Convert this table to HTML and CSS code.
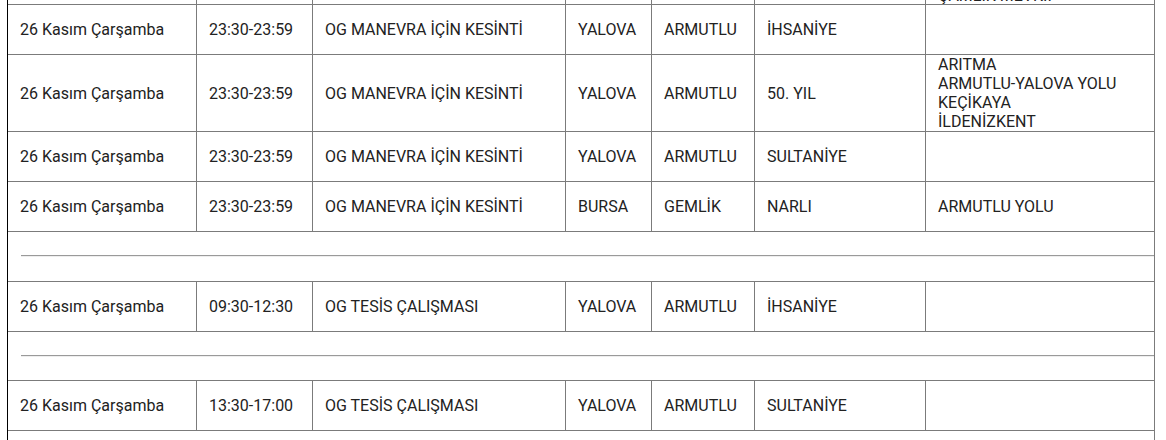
FILE: index.html
```html
<!DOCTYPE html>
<html lang="tr">
<head>
<meta charset="utf-8">
<title>Kesinti Listesi</title>
<link rel="stylesheet" href="styles.css">
</head>
<body>
<div class="frame">
  <table class="outages">
    <colgroup>
      <col class="w-date"><col class="w-time"><col class="w-reason"><col class="w-city"><col class="w-town"><col class="w-hood"><col class="w-street">
    </colgroup>
    <tbody>
      <tr class="prev">
        <td></td><td></td><td></td><td></td><td></td><td></td>
        <td class="tail">KARADERE<br>SAHİL YOLU<br>ÇAMLIK MEVKİİ</td>
      </tr>
      <tr>
        <td>26 Kasım Çarşamba</td><td>23:30-23:59</td><td>OG MANEVRA İÇİN KESİNTİ</td><td>YALOVA</td><td>ARMUTLU</td><td>İHSANİYE</td><td></td>
      </tr>
      <tr>
        <td>26 Kasım Çarşamba</td><td>23:30-23:59</td><td>OG MANEVRA İÇİN KESİNTİ</td><td>YALOVA</td><td>ARMUTLU</td><td>50. YIL</td>
        <td class="multi">ARITMA<br>ARMUTLU-YALOVA YOLU<br>KEÇİKAYA<br>İLDENİZKENT</td>
      </tr>
      <tr>
        <td>26 Kasım Çarşamba</td><td>23:30-23:59</td><td>OG MANEVRA İÇİN KESİNTİ</td><td>YALOVA</td><td>ARMUTLU</td><td>SULTANİYE</td><td></td>
      </tr>
      <tr>
        <td>26 Kasım Çarşamba</td><td>23:30-23:59</td><td>OG MANEVRA İÇİN KESİNTİ</td><td>BURSA</td><td>GEMLİK</td><td>NARLI</td><td>ARMUTLU YOLU</td>
      </tr>
      <tr class="sep">
        <td colspan="7"><hr></td>
      </tr>
      <tr>
        <td>26 Kasım Çarşamba</td><td>09:30-12:30</td><td>OG TESİS ÇALIŞMASI</td><td>YALOVA</td><td>ARMUTLU</td><td>İHSANİYE</td><td></td>
      </tr>
      <tr class="sep">
        <td colspan="7"><hr></td>
      </tr>
      <tr>
        <td>26 Kasım Çarşamba</td><td>13:30-17:00</td><td>OG TESİS ÇALIŞMASI</td><td>YALOVA</td><td>ARMUTLU</td><td>SULTANİYE</td><td></td>
      </tr>
      <tr class="sep">
        <td colspan="7"><hr></td>
      </tr>
    </tbody>
  </table>
</div>
</body>
</html>
```

FILE: styles.css
```css
html, body {
  margin: 0;
  padding: 0;
  background: #ffffff;
}

body {
  font-family: Roboto, "Noto Sans", "Liberation Sans", sans-serif;
  font-size: 16px;
  color: #222222;
  overflow: hidden;
}

.frame {
  margin-left: 7px;
  border-left: 1px solid #000000;
  width: 1147px;
}

.outages {
  margin-top: -47px;
  width: 1147px;
  table-layout: fixed;
  border-collapse: separate;
  border-spacing: 0;
  line-height: normal;
}

.w-date { width: 189px; }
.w-time { width: 116px; }
.w-reason { width: 253px; }
.w-city { width: 86px; }
.w-town { width: 103px; }
.w-hood { width: 171px; }
.w-street { width: 229px; }

.outages td {
  box-sizing: border-box;
  height: 50px;
  padding: 0 12px;
  vertical-align: middle;
  border-right: 1px solid #7b7b7b;
  border-bottom: 1px solid #7b7b7b;
  white-space: nowrap;
}

.outages td.multi {
  padding-top: 0;
  padding-bottom: 0;
}

.outages td.tail {
  padding-top: 0;
  padding-bottom: 0;
  line-height: 17px;
}

.outages .sep td {
  height: 49.5px;
  padding: 0 0 0 13px;
}

.outages hr {
  margin: 0;
  border: 0;
  border-top: 1px solid #9a9a9a;
  border-bottom: 1px solid #eeeeee;
  height: 0;
}
```
